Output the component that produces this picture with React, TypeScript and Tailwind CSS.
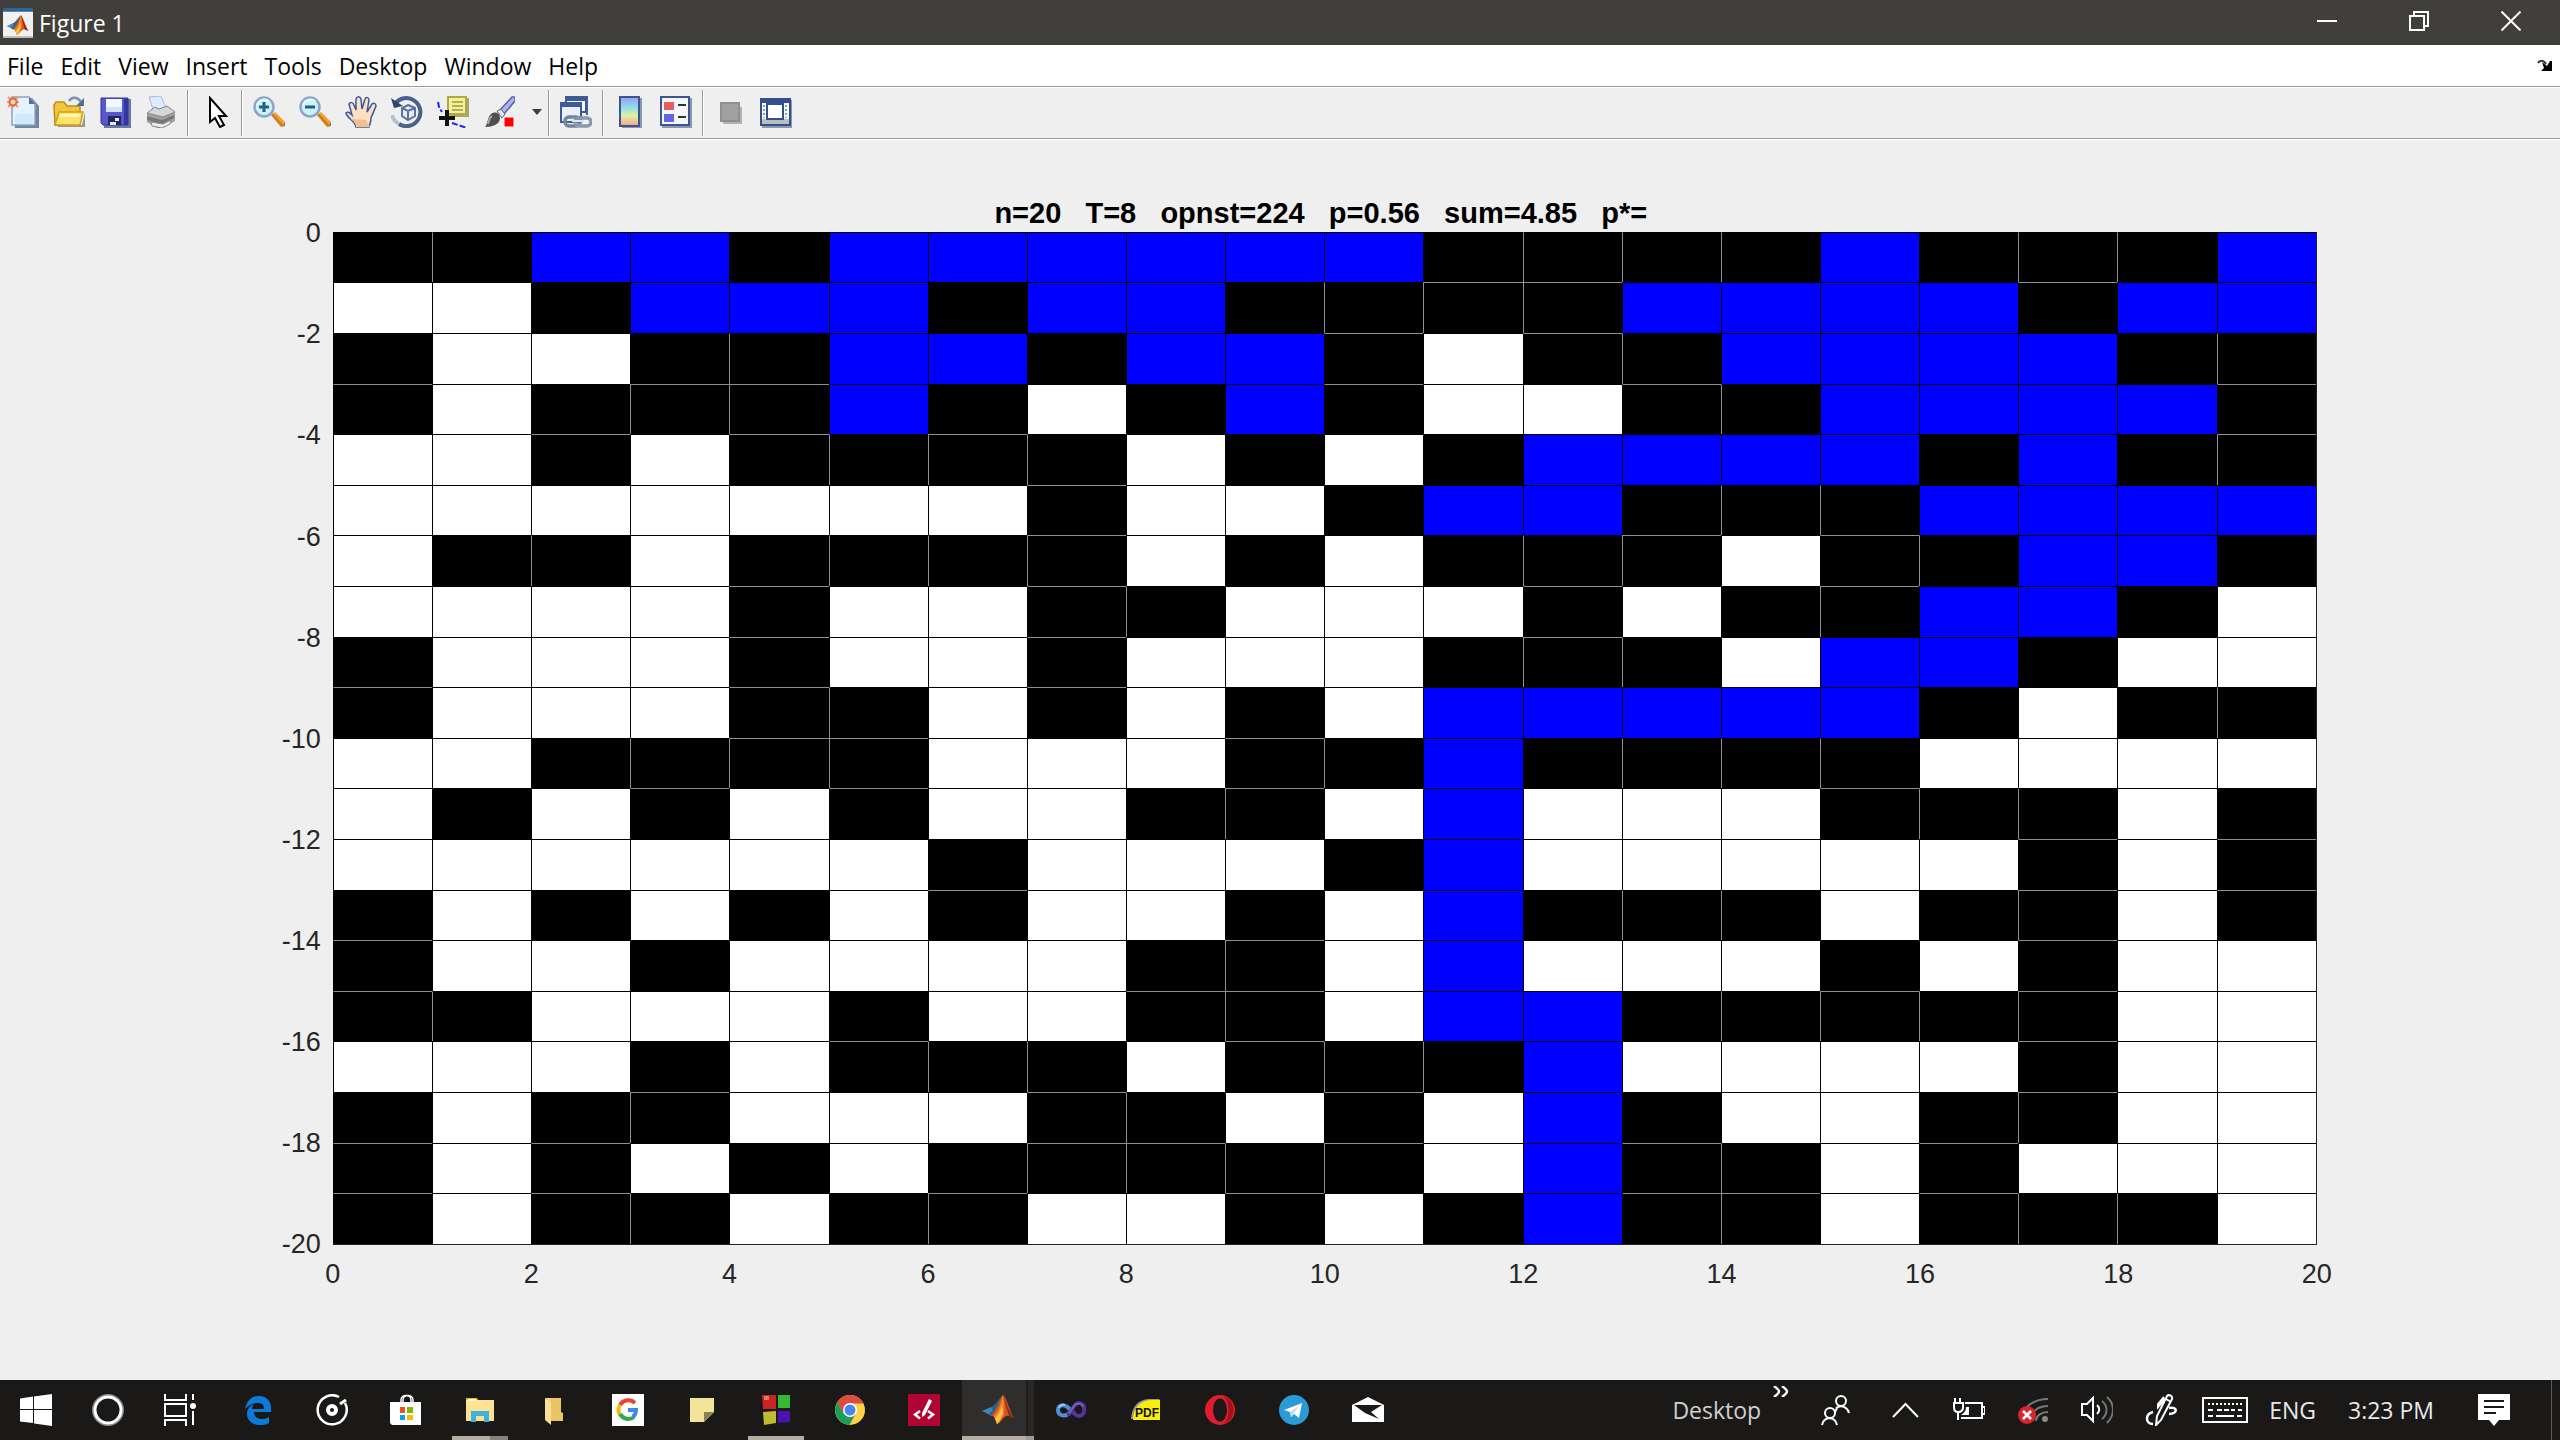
import React from "react";

type IconProps = { children: React.ReactNode; className?: string };

function Icon({ children, className = "h-8 w-8" }: IconProps) {
  return (
    <svg viewBox="0 0 32 32" className={className} fill="none" aria-hidden="true">
      {children}
    </svg>
  );
}

/* ---------- chart data: K = blocked, W = open, B = wetted path ---------- */

const ROWS = [
  "KKBBKBBBBBBKKKKBKKKB",
  "WWKBBBKBBKKKKBBBBKBB",
  "KWWKKBBKBBKWKKBBBBKK",
  "KWKKKBKWKBKWWKKBBBBK",
  "WWKWKKKKWKWKBBBBKBKK",
  "WWWWWWWKWWKBBKKKBBBB",
  "WKKWKKKKWKWKKKWKKBBK",
  "WWWWKWWKKWWWKWKKBBKW",
  "KWWWKWWKWWWKKKWBBKWW",
  "KWWWKKWKWKWBBBBBKWKK",
  "WWKKKKWWWKKBKKKKWWWW",
  "WKWKWKWWKKWBWWWKKKWK",
  "WWWWWWKWWWKBWWWWWKWK",
  "KWKWKWKWWKWBKKKWKKWK",
  "KWWKWWWWKKWBWWWKWKWW",
  "KKWWWKWWKKWBBKKKKKWW",
  "WWWKWKKKWKKKBWWWWKWW",
  "KWKKWWWKKWKWBKWWKKWW",
  "KWKWKWKKKKKWBKKWKWWW",
  "KWKKWKKWWKWKBKKWKKKW",
];

const FILL: Record<string, string> = {
  K: "bg-black",
  W: "bg-white",
  B: "bg-[#0000ff]",
};

const TICKS = [0, 2, 4, 6, 8, 10, 12, 14, 16, 18, 20];

function Cell({ r, c }: { r: number; c: number }) {
  const v = ROWS[r][c];
  const up = r > 0 ? ROWS[r - 1][c] : "W";
  const left = c > 0 ? ROWS[r][c - 1] : "W";
  const top = v === "K" && up === "K" ? "border-t-[#8f8f8f]" : "border-t-black";
  const side = v === "K" && left === "K" ? "border-l-[#8f8f8f]" : "border-l-black";
  return <div className={`border-l border-t ${top} ${side} ${FILL[v]}`} />;
}

function Figure() {
  return (
    <main className="grid flex-1 grid-cols-[130fr_775fr_95fr] grid-rows-[74fr_817fr_109fr] bg-[#efefef] font-['Liberation_Sans',sans-serif] text-[27px] leading-none text-[#262626]">
      <div />
      <h1 className="flex items-end justify-center whitespace-pre pb-1 pr-2 text-[29px] font-bold text-black">
        {"n=20   T=8   opnst=224   p=0.56   sum=4.85   p*="}
      </h1>
      <div />

      <div className="flex flex-col justify-between pr-3 pt-0.5">
        {TICKS.map((t) => (
          <div key={t} className="flex h-0 items-center justify-end">
            {t === 0 ? "0" : `-${t}`}
          </div>
        ))}
      </div>
      <div
        role="img"
        aria-label="Percolation grid"
        className="grid grid-cols-20 grid-rows-20 border-b border-r border-[#222222]"
      >
        {ROWS.map((row, r) => row.split("").map((_, c) => <Cell key={`${r}-${c}`} r={r} c={c} />))}
      </div>
      <div />

      <div />
      <div className="flex justify-between pt-4">
        {TICKS.map((t) => (
          <div key={t} className="flex w-0 justify-center">
            {t}
          </div>
        ))}
      </div>
      <div />
    </main>
  );
}

/* ---------- shared drawings ---------- */

function MatlabMark() {
  return (
    <>
      <path d="M0 17 L9 13 L14 16 L9 22 L6 20 Z" fill="#3f86b8" />
      <path d="M9 13 C14 11 17 4 21 1 C19 8 17 14 12 20 L9 22 L7 20 L11 16 Z" fill="#2f5f86" />
      <path d="M21 1 C18 4 17 13 9 22 C12 21 13 26 15 30 C20 28 22 20 27 22 L32 24 C28 18 24 2 21 1 Z" fill="#d9531e" />
      <path d="M21 1 C19 8 18 16 12 22 C14 24 14 27 15 30 C19 28 20 22 22 20 C22 14 22 6 21 1 Z" fill="#f08a2c" />
      <path d="M20 12 C18 18 16 22 13 24 L15 30 C18 28 19 22 21 20 Z" fill="#f9c04a" />
      <path d="M21 1 C24 8 27 18 32 24 L27 22 C25 16 23 8 21 1 Z" fill="#8e2a16" />
    </>
  );
}

/* ---------- title bar ---------- */

function TitleBar() {
  return (
    <header className="flex h-[45px] items-center bg-[#403f3c] pl-[3px] pr-[3px] text-white">
      <Icon className="h-[30px] w-[30px]">
        <rect width="32" height="32" fill="#f1f1f1" />
        <rect width="32" height="4" fill="#2f6391" />
        <rect y="30" width="32" height="2" fill="#b9b9b9" />
        <g transform="translate(4 7) scale(0.72)">
          <MatlabMark />
        </g>
      </Icon>
      <span className="ml-1.5 flex-1 text-[23px] leading-7">Figure 1</span>
      <button aria-label="Minimize" className="flex h-full w-[92px] items-center justify-center pb-1">
        <svg viewBox="0 0 20 20" className="h-5 w-5" aria-hidden="true">
          <path d="M0 9h20v2H0z" fill="#fff" />
        </svg>
      </button>
      <button aria-label="Restore" className="flex h-full w-[92px] items-center justify-center pb-1">
        <svg viewBox="0 0 20 20" className="h-5 w-5" fill="none" stroke="#fff" strokeWidth="2" aria-hidden="true">
          <path d="M1 5h14v14H1zM5 5V1h14v14h-4" />
        </svg>
      </button>
      <button aria-label="Close" className="flex h-full w-[92px] items-center justify-center pb-1">
        <svg viewBox="0 0 20 20" className="h-5 w-5" fill="none" stroke="#fff" strokeWidth="2" aria-hidden="true">
          <path d="M.5.5l19 19M19.5.5l-19 19" />
        </svg>
      </button>
    </header>
  );
}

/* ---------- menu bar ---------- */

const MENUS = ["File", "Edit", "View", "Insert", "Tools", "Desktop", "Window", "Help"];

function MenuBar() {
  return (
    <nav className="flex h-[42px] items-center border-b border-[#9a9a9a] bg-white pl-[7px] pr-[7px] text-[23px] leading-7 text-black">
      <div className="flex flex-1 gap-[17px]">
        {MENUS.map((m) => (
          <button key={m}>{m}</button>
        ))}
      </div>
      <button aria-label="Dock figure">
        <svg viewBox="0 0 16 12" className="h-3 w-4" aria-hidden="true">
          <path d="M1 3C3 0 7 0 9 4" fill="none" stroke="#333" strokeWidth="2" />
          <path d="M5 2l5 4 3-5h2v10H4l3-3z" fill="#000" />
        </svg>
      </button>
    </nav>
  );
}

/* ---------- toolbar ---------- */

function ToolButton({ label, children }: { label: string; children: React.ReactNode }) {
  return (
    <button aria-label={label} className="flex h-full w-[46px] items-center justify-center pb-0.5">
      <Icon>{children}</Icon>
    </button>
  );
}

function Separator() {
  return <span className="ml-[3px] mr-[3px] h-[46px] w-0.5 border-l border-r border-l-[#999999] border-r-white" />;
}

function Magnifier({ plus }: { plus: boolean }) {
  return (
    <>
      <path d="M18 19l4-3 10 10-4 5z" fill="#f0a030" />
      <path d="M28 31l4-5v4z" fill="#a97a3c" />
      <path d="M18 19l2-1.500 10 11-2 2z" fill="#d67d16" />
      <circle cx="11" cy="11" r="9.500" fill="#cdf1fa" stroke="#8aa6cc" strokeWidth="2.500" />
      <path d="M4 9a8 8 0 0 1 12-4" stroke="#eefcff" strokeWidth="2" />
      <path d="M6 11h10" stroke="#1f5f86" strokeWidth="3" />
      {plus && <path d="M11 6v10" stroke="#1f5f86" strokeWidth="3" />}
    </>
  );
}

function Toolbar() {
  return (
    <div className="flex h-[52px] items-center border-b border-t border-b-[#9a9a9a] border-t-white bg-[#efefef]">
      <ToolButton label="New Figure">
        <path d="M6 2h19l7 8v22H8z" fill="#6f86a3" />
        <path d="M5 1h17l6 7v21H5z" fill="#e4f3ff" stroke="#8ba2c8" strokeWidth="1.500" />
        <path d="M8 18h18v10H8z" fill="#cfe8fb" />
        <path d="M22 1v7h6z" fill="#5671a0" />
        <path d="M1 1l10 10M11 1L1 11M6 0v12M0 6h12" stroke="#ee9a78" strokeWidth="2" />
        <circle cx="6" cy="6" r="3.500" fill="#ffd9b0" stroke="#e0673c" strokeWidth="2" />
      </ToolButton>
      <ToolButton label="Open File">
        <path d="M4 29h25l3-13v15H5z" fill="#9a9a90" />
        <path d="M1 9l2-3h8l3 4h13v19H2z" fill="#f0c63c" stroke="#c08e14" strokeWidth="1.500" />
        <path d="M2 29l4-13h24l-3 13z" fill="#fbe36a" stroke="#d0a020" strokeWidth="1.500" />
        <path d="M7 18h20l-1 3H6z" fill="#fff6b4" />
        <path d="M16 5c3-5 9-4 12 1" stroke="#7c93ad" strokeWidth="2.500" />
        <path d="M31 2v8h-8z" fill="#54708f" />
      </ToolButton>
      <ToolButton label="Save Figure">
        <path d="M4 3h28v29H5z" fill="#6c79a4" />
        <path d="M2 2h27v27H4l-2-2z" fill="#5658cc" stroke="#3030a0" />
        <path d="M25 3h4v26h-4z" fill="#3436a4" />
        <path d="M7 3h16v13H7z" fill="#f3f7ff" />
        <path d="M7 11h16v5H7z" fill="#d3defa" />
        <path d="M9 20h13v9H9z" fill="#24265c" />
        <path d="M16 22h4v3h-4zM11 26h6v3h-6z" fill="#e8e8f0" />
      </ToolButton>
      <ToolButton label="Print Figure">
        <path d="M4 1l12-1 5 12-12 4z" fill="#dcebff" stroke="#a7bbdd" />
        <path d="M2 17l8-6 4 2 8-3 8 6v9l-12 7H12L2 26z" fill="#a2a2a2" />
        <path d="M2 17l8-6 4 2 8-3 8 6-12 5z" fill="#d6d6d6" stroke="#888" />
        <path d="M2 20l15 4 12-5v3l-12 6-15-4z" fill="#777" />
        <path d="M6 26l12 2 8-4-1 4-8 4-10-2z" fill="#eeeeee" stroke="#888" />
      </ToolButton>
      <Separator />
      <ToolButton label="Edit Plot">
        <path d="M11 2v24l5-4 5 9 4-2-5-9h7z" fill="#fff" stroke="#000" strokeWidth="2" />
      </ToolButton>
      <Separator />
      <ToolButton label="Zoom In">
        <Magnifier plus />
      </ToolButton>
      <ToolButton label="Zoom Out">
        <Magnifier plus={false} />
      </ToolButton>
      <ToolButton label="Pan">
        <path
          d="M11 31C10 25 2 22 1 17c2-2 4 0 6 2L4 8c1-2 4-2 5 1l2 5 0-11c1-3 4-3 5 0l1 10 3-10c1-2 4-2 4 1l-2 12 5-8c2-2 4 0 4 2l-5 12c0 4-1 6-2 9z"
          fill="#fde0c0"
          stroke="#3c58a0"
          strokeWidth="1.500"
        />
        <path d="M11 31c0-4-3-6-5-8l15 1 4 7z" fill="#f3bd8e" />
      </ToolButton>
      <ToolButton label="Rotate 3D">
        <path d="M4 8A14 14 0 1 1 8 28" stroke="#485f90" strokeWidth="4" />
        <path d="M1 19c1 4 3 7 7 9" stroke="#b9c2cc" strokeWidth="4" />
        <path d="M0 2l3 10 9-2z" fill="#33446c" />
        <path d="M17 9l7 3v8l-7 4-6-4v-8zM11 12l6 3 7-3M17 15v9" fill="#e5ebf5" stroke="#5c719c" strokeWidth="2" />
      </ToolButton>
      <ToolButton label="Data Cursor">
        <path d="M13 2h19v19H13z" fill="#a6a66a" />
        <path d="M11 1h18v17H11z" fill="#f4f09c" stroke="#b0a840" strokeWidth="2" />
        <path d="M15 6h11M15 10h11M15 14h11" stroke="#b5ae58" strokeWidth="2" />
        <path d="M1 6l1 5 3 5M15 27l6 2 9 3" stroke="#2222ee" strokeWidth="2" strokeDasharray="6 2" />
        <path d="M2 22h16M10 14v16" stroke="#111" strokeWidth="4" />
      </ToolButton>
      <ToolButton label="Brush Data">
        <g transform="translate(2 0)">
          <path d="M15 14L27 1h3v4L19 18z" fill="#a9b2ec" stroke="#5a63ae" strokeWidth="1.500" />
          <path d="M12 15l4-2 4 5-3 4z" fill="#dfe3ea" stroke="#666" />
          <path d="M0 31c3-3 2-9 6-13 4-3 9-1 9 4 0 6-7 9-15 9z" fill="#4f4f4f" />
          <path d="M7 20c-3 2-3 5-4 8" stroke="#a8a8a8" strokeWidth="2" />
          <path d="M19 21h10v10H19z" fill="#ff0000" stroke="#fff" />
        </g>
      </ToolButton>
      <button aria-label="Brush options" className="flex h-full w-[23px] items-center justify-end pb-0.5 pr-0.5">
        <svg viewBox="0 0 12 6" className="h-1.5 w-3" aria-hidden="true">
          <path d="M1 0h10L6 6z" fill="#3c3c3c" />
        </svg>
      </button>
      <Separator />
      <ToolButton label="Link Plot">
        <path d="M7 1h20v18" stroke="#4a6090" strokeWidth="2" />
        <path d="M6 1h20v15H6z" fill="#f4f8ff" stroke="#3f5a94" strokeWidth="2" />
        <path d="M6 1h20v4H6z" fill="#3f5a94" />
        <path d="M1 7h20v19H1z" fill="#e8f0fa" stroke="#3f5a94" strokeWidth="2" />
        <path d="M1 7h20v4H1z" fill="#3f5a94" />
        <rect x="5" y="21" width="15" height="9" rx="4" stroke="#71859b" strokeWidth="3.500" />
        <rect x="15" y="22" width="16" height="8" rx="4" stroke="#8799ad" strokeWidth="3.500" />
        <path d="M12 25h12" stroke="#dce5ee" strokeWidth="2" />
      </ToolButton>
      <Separator />
      <ToolButton label="Insert Colorbar">
        <defs>
          <linearGradient id="colorbar" x1="0" y1="0" x2="0" y2="1">
            <stop offset="0" stopColor="#9a9bee" />
            <stop offset="0.35" stopColor="#8fdcf0" />
            <stop offset="0.65" stopColor="#e3f0a0" />
            <stop offset="1" stopColor="#f5a08c" />
          </linearGradient>
        </defs>
        <path d="M8 2h20v30H8z" fill="#8a97ae" />
        <path d="M6 1h19v29H6z" fill="url(#colorbar)" stroke="#3c5490" strokeWidth="2" />
      </ToolButton>
      <ToolButton label="Insert Legend">
        <path d="M2 2h30v30H2z" fill="#8a97ae" />
        <path d="M1 1h28v28H1z" fill="#f6f7fd" stroke="#3c5490" strokeWidth="2" />
        <path d="M4 6h10v8H4z" fill="#e85c60" />
        <path d="M4 18h10v8H4z" fill="#6464e4" />
        <path d="M18 9h8M18 21h8" stroke="#333" strokeWidth="2" />
      </ToolButton>
      <Separator />
      <ToolButton label="Hide Plot Tools">
        <path d="M9 8h17v3h2v17H9v-2z" fill="#b3b3b3" />
        <path d="M6 6h20v20H6z" fill="#8f8f8f" />
        <path d="M8 8h16v16H8z" fill="#a0a0a0" />
      </ToolButton>
      <ToolButton label="Show Plot Tools">
        <path d="M2 4h30v28H2z" fill="#8a97ae" />
        <path d="M1 3h29v26H1z" fill="#f4f8ff" stroke="#34508c" strokeWidth="2" />
        <path d="M0 2h30v5H0z" fill="#34508c" />
        <path d="M2 23h27v5H2z" fill="#b9bcc0" />
        <path d="M7 8h16v15H7z" fill="#fff" stroke="#34508c" strokeWidth="2" />
        <path d="M4 9v13M26 9v13" stroke="#8d9bb4" strokeWidth="2" strokeDasharray="2 2" />
      </ToolButton>
    </div>
  );
}

/* ---------- taskbar ---------- */

type App = { label: string; icon: React.ReactNode; state?: "open" | "active" | "multi" };

const APPS: App[] = [
  {
    label: "Microsoft Edge",
    icon: (
      <path
        d="M3 15C5 6 10 2 17 2c9 0 13 7 12 16H12c0 5 4 7 8 7 3 0 5-1 7-2v6c-3 2-6 2-9 2-8 0-13-5-13-11 0-5 3-8 7-10-1 1-2 3-2 5h12c0-4-2-6-6-6-5 0-9 2-13 6z"
        fill="#0a7bdb"
      />
    ),
  },
  {
    label: "Groove Music",
    icon: (
      <>
        <path d="M23 3A14.500 14.500 0 1 0 29 9" stroke="#fff" strokeWidth="2.500" />
        <path d="M24 10l6-4" stroke="#fff" strokeWidth="3" />
        <circle cx="16" cy="16" r="4" stroke="#fff" strokeWidth="4" />
      </>
    ),
  },
  {
    label: "Microsoft Store",
    icon: (
      <>
        <path d="M11 10V6c0-6 10-6 10 0v4M13 10V6c0-6 10-6 10 0v4" stroke="#fff" strokeWidth="1.500" />
        <path d="M0 8h31v23H2l-2-2z" fill="#fff" />
        <path d="M10 13h5v6h-5z" fill="#f25022" />
        <path d="M17 13h6v6h-6z" fill="#7fba00" />
        <path d="M10 21h5v5h-5z" fill="#00a4ef" />
        <path d="M17 21h6v5h-6z" fill="#ffb900" />
      </>
    ),
  },
  {
    label: "File Explorer",
    state: "multi",
    icon: (
      <>
        <path d="M2 4h11l2 3h-13z" fill="#e8b820" />
        <path d="M2 6h28v21H2z" fill="#fbe294" />
        <path d="M4 5h8v2H4z" fill="#fff8dc" />
        <path d="M7 17h18v11h-5v-6h-8v6H7z" fill="#3faee0" />
      </>
    ),
  },
  {
    label: "Folder",
    icon: (
      <>
        <path d="M8 4h15v14l2 1v8H12z" fill="#e9c566" />
        <path d="M7 4l6 5v22l-6-5z" fill="#fbe09a" />
        <path d="M13 9V4h-6z" fill="#f4d27c" />
      </>
    ),
  },
  {
    label: "Google",
    icon: (
      <>
        <path d="M0 0h32v32H0z" fill="#fff" />
        <path d="M8 11A9.500 9.500 0 0 1 23 9" stroke="#ea4335" strokeWidth="4" />
        <path d="M8 11a9.500 9.500 0 0 0 0 10" stroke="#fbbc05" strokeWidth="4" />
        <path d="M8 20a9.500 9.500 0 0 0 14 3" stroke="#34a853" strokeWidth="4" />
        <path d="M16 16h8c0 3-1 5-3 7" stroke="#4285f4" strokeWidth="4" />
      </>
    ),
  },
  {
    label: "Sticky Notes",
    icon: (
      <>
        <path d="M4 4h24v14L18 28H4z" fill="#f2e59a" />
        <path d="M28 18H18v10z" fill="#8a8153" />
      </>
    ),
  },
  {
    label: "Color blocks",
    state: "open",
    icon: (
      <>
        <path d="M2 1h14v14L3 15z" fill="#c9241f" />
        <path d="M4 2h5v4H4z" fill="#e8736c" />
        <path d="M18 1h12v13H18z" fill="#35b82f" />
        <path d="M3 18l13-1v12L4 31z" fill="#bdbc32" />
        <path d="M18 17h12v11l-12 1z" fill="#4a12b4" />
      </>
    ),
  },
  {
    label: "Google Chrome",
    icon: (
      <>
        <circle cx="16" cy="16" r="15" fill="#fdd248" />
        <path d="M3 8.500A15 15 0 0 1 29.500 9.500H16L9 19.500z" fill="#db4b3e" />
        <path d="M3 8.500A15 15 0 0 0 15.500 31L21.500 20 16 23 9.800 19.500z" fill="#1f9d58" />
        <circle cx="16" cy="16" r="7" fill="#fff" />
        <circle cx="16" cy="16" r="5.500" fill="#4a86ee" />
      </>
    ),
  },
  {
    label: "Code Writer",
    icon: (
      <>
        <path d="M0 0h32v32H0z" fill="#b00532" />
        <path d="M12 17l-5 3.500 5 4M20 17l5 3.500-5 4" stroke="#fff" strokeWidth="2.500" />
        <path d="M21 5l3 2-7 14-3 2v-4z" fill="#fff" />
      </>
    ),
  },
  { label: "MATLAB", state: "active", icon: <MatlabMark /> },
  {
    label: "Visual Studio",
    icon: (
      <>
        <path d="M15 17C10 9 2 10 2 16s8 8 13 1" stroke="#4f8fd6" strokeWidth="4" />
        <path d="M11 21c5-2 6-12 12-12 7 0 7 13 0 13-4 0-6-4-8-7" stroke="#56349c" strokeWidth="4" />
        <path d="M13 19c3-3 4-7 7-9 3-1 6 0 7 3" stroke="#7f6cc8" strokeWidth="1.500" />
        <path d="M3 14c1-3 4-4 6-3" stroke="#a8d0f6" strokeWidth="1.500" />
      </>
    ),
  },
  {
    label: "PDF Reader",
    icon: (
      <>
        <path d="M1 25C2 12 8 6 19 5h11l-2 2C14 7 6 12 4 25z" fill="#9a9a9a" />
        <path d="M3 26C3 13 11 7 20 6h10v20z" fill="#f7ee10" />
        <text x="17" y="23" textAnchor="middle" fontSize="12" fontWeight="700" fill="#111" fontFamily="Liberation Sans">
          PDF
        </text>
      </>
    ),
  },
  {
    label: "Opera",
    icon: (
      <>
        <ellipse cx="16" cy="16" rx="15" ry="15" fill="#e01c2e" />
        <path d="M20 2a15 15 0 0 1 0 28c6-6 6-22 0-28z" fill="#a3101e" />
        <ellipse cx="16" cy="16" rx="7" ry="11.500" fill="#1a1917" />
      </>
    ),
  },
  {
    label: "Telegram",
    icon: (
      <>
        <circle cx="16" cy="16" r="15" fill="#2a9bd6" />
        <path d="M6 16l18-7-3 15-5-4-3 3-1-5z" fill="#fff" />
        <path d="M12 18l9-6-6 8-2 3z" fill="#bcd9ea" />
      </>
    ),
  },
  {
    label: "Mail",
    icon: (
      <>
        <path d="M0 11L16 3l16 8v17H0z" fill="#fff" />
        <path d="M2 11h28l-11 7 8 7-14-6z" fill="#1a1917" />
      </>
    ),
  },
];

function TaskButton({ app }: { app: App }) {
  const active = app.state === "active";
  return (
    <button
      aria-label={app.label}
      className={`relative flex h-full w-[72px] items-center justify-center ${active ? "bg-[#2f2e2d]" : ""}`}
    >
      <Icon>{app.icon}</Icon>
      {app.state === "open" && <span className="absolute bottom-0 left-2 right-2 h-1 bg-[#b3ada6]" />}
      {app.state === "multi" && (
        <span className="absolute bottom-0 left-2 right-2 h-1 border-r-[18px] border-[#85807c] bg-[#b3ada6]" />
      )}
      {active && (
        <>
          <span className="absolute bottom-0 right-0 top-0 w-2 border-l-2 border-[#1f1e1d] bg-[#282726]" />
          <span className="absolute bottom-0 left-0 right-0 h-1 border-r-8 border-[#a09a94] bg-[#b3ada6]" />
        </>
      )}
    </button>
  );
}

function TrayButton({ label, children, width }: { label: string; children: React.ReactNode; width: string }) {
  return (
    <button aria-label={label} className={`flex h-full items-center justify-center ${width}`}>
      <Icon>{children}</Icon>
    </button>
  );
}

function Taskbar() {
  return (
    <footer className="flex h-[60px] items-center bg-[#1a1917] text-[23px] leading-7 text-[#e8e8e8]">
      <TrayButton label="Start" width="w-[72px]">
        <path d="M0 4.500L13 2.500V15H0zM14 2.400L32 0v15H14zM0 16h13v13L0 27.500zM14 16h18v16l-18-2.400z" fill="#fff" />
      </TrayButton>
      <TrayButton label="Cortana" width="w-[72px]">
        <circle cx="16" cy="16" r="14" stroke="#8a8a8a" strokeWidth="4" />
        <circle cx="16" cy="16" r="13" stroke="#fff" strokeWidth="3" />
      </TrayButton>
      <TrayButton label="Task View" width="w-[72px]">
        <path d="M1 0v6h21V0M1 32v-6h21v6M1 10h21v12H1zM29 0v6M29 17v14" stroke="#fff" strokeWidth="2" />
        <circle cx="29" cy="12" r="3" fill="#fff" />
      </TrayButton>
      <div className="ml-1.5 flex h-full flex-1 gap-0.5">
        {APPS.map((a) => (
          <TaskButton key={a.label} app={a} />
        ))}
      </div>

      <button className="text-[#cfcfcf]">Desktop</button>
      <button aria-label="More toolbars" className="ml-3 flex h-full items-start pt-1.5">
        <svg viewBox="0 0 16 11" className="h-[11px] w-4" fill="none" stroke="#fff" strokeWidth="2.500" aria-hidden="true">
          <path d="M1 0c4 3 5 4 5 5.500S5 8 1 11M9 0c4 3 5 4 5 5.500S13 8 9 11" />
        </svg>
      </button>
      <div className="ml-3 flex h-full">
        <TrayButton label="People" width="w-[72px]">
          <circle cx="20" cy="7" r="5" stroke="#fff" strokeWidth="2" />
          <path d="M15 14c6-4 12 0 13 5" stroke="#fff" strokeWidth="2" />
          <circle cx="9" cy="19" r="5" stroke="#fff" strokeWidth="2" />
          <path d="M1 31c2-9 13-9 15 0M14 18l2-4" stroke="#fff" strokeWidth="2" />
        </TrayButton>
        <TrayButton label="Show hidden icons" width="w-16">
          <path d="M4 23L16.500 10 29 23" stroke="#fff" strokeWidth="2" />
        </TrayButton>
        <TrayButton label="Battery" width="w-16">
          <path d="M12 9h17v15H8M30 13h2v7h-2" stroke="#fff" strokeWidth="2" />
          <path d="M2 4v5M7 4v5M0 9h10v4c0 3-2 5-5 5s-4-2-4-5V9M5 18v8" stroke="#fff" strokeWidth="2" />
          <path d="M13 13h3v8H8c3-2 5-4 5-8z" fill="#fff" />
        </TrayButton>
        <TrayButton label="Network" width="w-16">
          <path d="M10 13C15 8 23 5 31 5M16 19c3-5 9-7 15-7M19 27c0-5 5-9 12-9" stroke="#777" strokeWidth="2" />
          <circle cx="28" cy="25" r="3" fill="#8a8a8a" />
          <circle cx="10" cy="21" r="9" fill="#d8252e" />
          <path d="M6 17l8 8M14 17l-8 8" stroke="#fff" strokeWidth="2.500" />
        </TrayButton>
        <TrayButton label="Volume" width="w-16">
          <path d="M1 10h5l6-6v23l-6-6H1z" stroke="#fff" strokeWidth="2" />
          <path d="M16 11c3 3 3 6 0 9" stroke="#fff" strokeWidth="2" />
          <path d="M21 7c6 5 6 13 0 18M26 3c8 7 8 18 0 26" stroke="#777" strokeWidth="2" />
        </TrayButton>
        <TrayButton label="Pen workspace" width="w-16">
          <path d="M8 30c-8 0-8-10 0-12M24 14c9-2 9 6 0 6" stroke="#fff" strokeWidth="2.500" />
          <path d="M11 31l1-9L22 2c2-2 6 0 5 3L16 26zM20 5l-7 8v-3l6-7M21 5l5 3" stroke="#fff" strokeWidth="2" />
        </TrayButton>
        <button aria-label="Touch keyboard" className="flex h-full w-16 items-center justify-center">
          <svg viewBox="0 0 46 26" className="h-[26px] w-[46px]" fill="none" stroke="#fff" strokeWidth="2" aria-hidden="true">
            <path d="M1 1h44v24H1z" />
            <path d="M6 7h34" strokeDasharray="2 2" />
            <path d="M6 13h5M15 13h18M36 13h4" strokeDasharray="5 2" />
            <path d="M6 19h5M14 19h18M35 19h5" />
          </svg>
        </button>
      </div>
      <button className="ml-3">ENG</button>
      <button className="ml-8">3:23 PM</button>
      <button aria-label="Action Center" className="ml-11 mr-[41px]">
        <Icon>
          <path d="M0 0h32v26h-11l-5 6-5-6H0z" fill="#fff" />
          <path d="M6 7h20M6 13h20M6 19h12" stroke="#1a1917" strokeWidth="2" />
        </Icon>
      </button>
      <span className="mr-2 h-full w-px bg-[#5c5b59]" />
    </footer>
  );
}

export default function App() {
  return (
    <div className="flex min-h-screen flex-col font-['Open_Sans','Noto_Sans',sans-serif]">
      <TitleBar />
      <MenuBar />
      <Toolbar />
      <div className="h-px bg-white" />
      <Figure />
      <Taskbar />
    </div>
  );
}
